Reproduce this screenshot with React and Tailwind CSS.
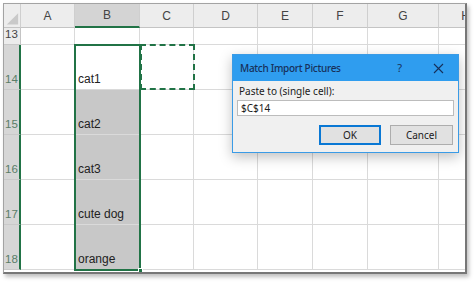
const cols = ['', 'A', 'B', 'C', 'D', 'E', 'F', 'G', 'H']
const rows = [
  { n: 13, h: 'h-[17px]' },
  { n: 14, h: 'h-[45px]', b: 'cat1' },
  { n: 15, h: 'h-[45px]', b: 'cat2' },
  { n: 16, h: 'h-[45px]', b: 'cat3' },
  { n: 17, h: 'h-[45px]', b: 'cute dog' },
  { n: 18, h: 'h-[45px]', b: 'orange' },
]

export default function App() {
  return (
    <div className="w-[474px] h-[283px] bg-white pt-[3px] pl-[3px] font-['Liberation_Sans',sans-serif]">
      <div className="relative w-[464px] h-[271px] border-t border-l border-[#a3a3a3] border-r-2 border-b-2 border-r-[#777] border-b-[#777] shadow-[2px_3px_4px_rgba(0,0,0,0.25)] overflow-hidden">
        <div className="grid grid-cols-[17px_54px_65px_54px_64px_55px_55px_71px_54px]">
          {/* column headers */}
          {cols.map((c, i) => (
            <div
              key={c || 'corner'}
              className={
                'h-[24px] flex items-center justify-center text-[12px] text-[#444] border-r border-[#cfcfcf] ' +
                (c === 'B'
                  ? 'bg-[#d4d4d4] border-b-2 border-b-[#217346]'
                  : 'bg-[#ededed] border-b border-b-[#c4c4c4]')
              }
            >
              {i === 0 ? (
                <svg width="17" height="24" viewBox="0 0 17 24">
                  <path d="M15 9 L15 21 L3 21 Z" fill="#c9c9c9" />
                </svg>
              ) : (
                c
              )}
            </div>
          ))}

          {/* body rows */}
          {rows.map((r) => {
            const sel = r.n >= 14
            return cols.map((c, i) => {
              if (i === 0) {
                return (
                  <div
                    key={r.n + 'h'}
                    className={
                      r.h +
                      ' flex items-end pl-[1px] pb-[1px] text-[11.5px] border-b border-[#c9c9c9] ' +
                      (sel
                        ? 'bg-[#d6d6d6] text-[#5a7d68] border-r-2 border-r-[#217346]'
                        : 'bg-[#ececec] text-[#444] border-r border-r-[#c4c4c4]')
                    }
                  >
                    {r.n}
                  </div>
                )
              }
              const isB = c === 'B'
              const fill = isB && r.n >= 15
              return (
                <div
                  key={r.n + c}
                  className={
                    r.h +
                    ' flex items-end pl-[3px] pb-[1px] text-[12px] text-[#222] border-r border-b border-[#dadada] ' +
                    (fill ? 'bg-[#c8c8c8]' : 'bg-white')
                  }
                >
                  {isB ? r.b : ''}
                </div>
              )
            })
          })}
        </div>

        {/* selection B14:B18 */}
        <div className="absolute left-[70px] top-[40px] w-[67px] h-[227px] border-2 border-[#217346]">
          <div className="absolute -right-[4px] -bottom-[4px] w-[5px] h-[5px] bg-[#217346] border border-white" />
        </div>

        {/* copy marquee C14 */}
        <div className="absolute left-[136px] top-[40px] w-[55px] h-[46px] border-2 border-dashed border-[#217346]" />

        {/* dialog */}
        <div className="absolute left-[228px] top-[50px] w-[227px] h-[99px] border border-[#3a9be6] bg-[#f0f0f0] shadow-[0_4px_12px_rgba(0,0,0,0.25)] font-['Noto_Sans',sans-serif]">
          <div className="h-[26px] bg-[#2f9def] flex items-center pl-[7px] pr-[14px] text-[#17305a]">
            <span className="text-[10px] font-medium tracking-[-0.3px] flex-1">Match Import Pictures</span>
            <span className="text-[11px] mr-[31px]">?</span>
            <svg width="11" height="11" viewBox="0 0 11 11">
              <path d="M1 1 L10 10 M10 1 L1 10" stroke="#17305a" strokeWidth="1.1" />
            </svg>
          </div>
          <div className="px-[4px] pt-[3px]">
            <div className="text-[10px] text-[#1a1a1a] pl-[2px] leading-[14px]">Paste to (single cell):</div>
            <div className="mt-[2px] h-[16px] bg-white border border-[#bcbcbc] flex items-center pl-[3px] text-[10px] text-[#1a1a1a]">
              $C$14
            </div>
            <div className="flex justify-end gap-[9px] mt-[9px] pr-[1px]">
              <div className="w-[62px] h-[20px] border-2 border-[#0a78d4] bg-[#e1e1e1] flex items-center justify-center text-[10px] text-[#1a1a1a]">
                OK
              </div>
              <div className="w-[63px] h-[20px] border border-[#adadad] bg-[#e1e1e1] flex items-center justify-center text-[10px] text-[#1a1a1a]">
                Cancel
              </div>
            </div>
          </div>
        </div>
      </div>
    </div>
  )
}
